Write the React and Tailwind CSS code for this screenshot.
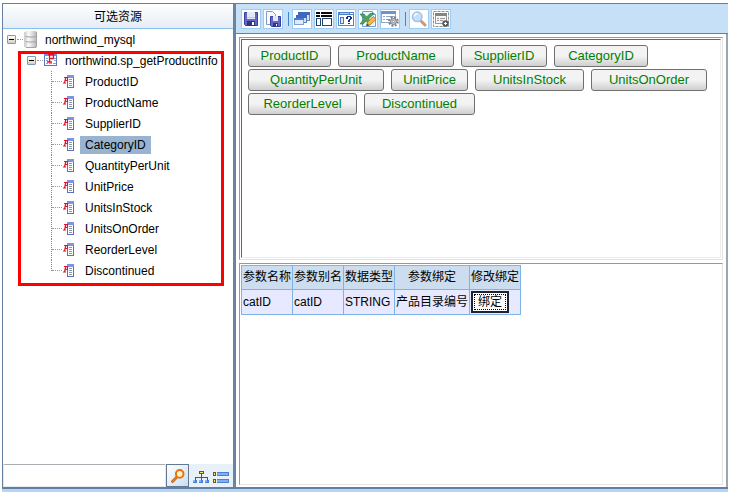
const FIELDS = [
    { name: 'ProductID', width: 'w-[83px]' },
    { name: 'ProductName', width: 'w-[116px]' },
    { name: 'SupplierID', width: 'w-[86px]' },
    { name: 'CategoryID', width: 'w-[94px]' },
    { name: 'QuantityPerUnit', width: 'w-[136px]' },
    { name: 'UnitPrice', width: 'w-[77px]' },
    { name: 'UnitsInStock', width: 'w-[109px]' },
    { name: 'UnitsOnOrder', width: 'w-[116px]' },
    { name: 'ReorderLevel', width: 'w-[109px]' },
    { name: 'Discontinued', width: 'w-[111px]' },
]

const PARAM_COLUMNS = ['参数名称', '参数别名', '数据类型', '参数绑定', '修改绑定']

const PARAMS = [{ name: 'catID', alias: 'catID', type: 'STRING', binding: '产品目录编号' }]

function SaveIcon() {
    return (
        <svg width="16" height="16" viewBox="0 0 16 16">
            <path d="M1.500 1.500h13v13h-12l-1-1z" fill="#6468c4" stroke="#3d3f9c" />
            <rect x="4" y="1" width="8" height="7" fill="#dfe9f8" />
            <path d="M4 6.500h8" stroke="#b9cbea" />
            <rect x="4" y="10" width="8" height="5" fill="#33347a" />
            <rect x="9" y="11" width="2" height="3" fill="#fff" />
        </svg>
    )
}

function SaveAsIcon() {
    return (
        <svg width="16" height="16" viewBox="0 0 16 16">
            <path d="M1.500 .5h6l3 3v10h-9z" fill="#f4f9ff" stroke="#7f9cc8" />
            <path d="M5.500 5.500h10v10h-9l-1-1z" fill="#6468c4" stroke="#3d3f9c" />
            <rect x="8" y="5" width="5" height="5" fill="#dfe9f8" />
            <rect x="8" y="12" width="5" height="4" fill="#33347a" />
            <rect x="11" y="13" width="1" height="2" fill="#fff" />
        </svg>
    )
}

function WindowsIcon() {
    return (
        <svg width="16" height="16" viewBox="0 0 16 16">
            <rect x="4.500" y="1.500" width="11" height="8" fill="#cfe0f7" stroke="#5a82c8" />
            <rect x="4" y="1" width="12" height="3" fill="#3e68bc" />
            <rect x="2.500" y="4.500" width="10" height="7" fill="#cfe0f7" stroke="#5a82c8" />
            <rect x="2" y="4" width="11" height="3" fill="#3e68bc" />
            <rect x=".5" y="7.500" width="9" height="6" fill="#dfeafa" stroke="#7f9fd8" />
            <rect x="0" y="7" width="10" height="2" fill="#4f78ca" />
        </svg>
    )
}

function LayoutIcon() {
    return (
        <svg width="16" height="16" viewBox="0 0 16 16" shapeRendering="crispEdges">
            <path d="M0 1h4v2H0zM5 1h11v2H5zM0 4h4v2H0zM5 4h11v2H5z" fill="#0a0a0a" />
            <rect x="0" y="7" width="5" height="8" fill="#21456f" />
            <rect x="1" y="8" width="3" height="6" fill="#fff" />
            <rect x="6" y="7" width="10" height="8" fill="#21456f" />
            <rect x="7" y="8" width="8" height="6" fill="#fff" />
        </svg>
    )
}

function HelpFormIcon() {
    return (
        <svg width="16" height="16" viewBox="0 0 16 16" shapeRendering="crispEdges">
            <rect x="0" y="1" width="16" height="14" fill="#4f82c8" />
            <rect x="1" y="4" width="14" height="10" fill="#fff" />
            <path d="M2 2h9v1H2z" fill="#a9cbf5" />
            <path d="M12 2h3v1h-3z" fill="#fff" />
            <path d="M2 6h4v7H2z" fill="#4777bd" />
            <path d="M3 7h2v5H3z" fill="#dbe8fa" />
            <path d="M9 5h4v1H9zM8 6h2v2H8zM12 6h2v2h-2zM11 8h2v1h-2zM10 9h2v2h-2zM10 12h2v1h-2z" fill="#142f86" />
        </svg>
    )
}

function ExcelEditIcon() {
    return (
        <svg width="16" height="16" viewBox="0 0 16 16">
            <path d="M2.500 .5h10l3 3v12h-13z" fill="#eaf3ff" stroke="#6c9fda" />
            <path d="M12.500 .5v3h3" fill="#fff" stroke="#6c9fda" />
            <path d="M0 3h4l2.500 3L10 2.500h4L8.500 8l1.500 2-2 2-2-2-3 3H0l4-5z" fill="#4ba35c" stroke="#24733a" strokeWidth=".6" />
            <path d="M6.500 15l1-4 6-5.500 2.500 3-6 5.500z" fill="#f4b948" stroke="#a8701d" strokeWidth=".8" />
            <path d="M6.500 15l.7-2.500 2 1.800z" fill="#5b4020" />
        </svg>
    )
}

function FormGearIcon() {
    return (
        <svg width="18" height="16" viewBox="0 0 18 16">
            <rect x=".5" y=".5" width="14" height="11" fill="#fff" stroke="#91a9cd" />
            <rect x="0" y="0" width="15" height="3" fill="#6b93cf" />
            <path d="M2 5.500h2M5 5.500h8M2 8.500h2M5 8.500h4" stroke="#8fa5c4" />
            <circle cx="12.500" cy="10.500" r="4.300" fill="none" stroke="#777e88" strokeWidth="2" strokeDasharray="1.9 1.480" />
            <circle cx="12.500" cy="10.500" r="3" fill="#c2c8d0" stroke="#777e88" />
            <circle cx="12.500" cy="10.500" r="1.100" fill="#fff" stroke="#777e88" strokeWidth=".7" />
        </svg>
    )
}

function PreviewIcon() {
    return (
        <svg width="16" height="16" viewBox="0 0 16 16">
            <path d="M10 10l4 4" stroke="#c99a6c" strokeWidth="3" strokeLinecap="round" />
            <circle cx="6.200" cy="5.800" r="4.800" fill="#c3e0fb" stroke="#9dc0e8" strokeWidth="1.400" />
            <path d="M3.500 5.500c0-2 1.500-2.700 3-2.700" fill="none" stroke="#fff" strokeWidth="1.400" />
        </svg>
    )
}

function FormAddIcon() {
    return (
        <svg width="18" height="18" viewBox="0 0 18 18">
            <rect x="1.500" y="1.500" width="15" height="15" fill="none" stroke="#8e8e8e" strokeDasharray="3 1" />
            <rect x="3.500" y="3.500" width="11" height="10" fill="#f6f6f6" stroke="#999" />
            <rect x="3" y="3" width="12" height="3" fill="#858585" />
            <path d="M5 8.500h2M8 8.500h5M5 10.500h2M8 10.500h3" stroke="#999" />
            <circle cx="13.500" cy="13.500" r="3.200" fill="#5c5c5c" />
            <path d="M13.500 12v3M12 13.500h3" stroke="#fff" />
        </svg>
    )
}

function DatabaseIcon() {
    return (
        <svg width="14" height="17" viewBox="0 0 14 17" className="shrink-0">
            <defs>
                <linearGradient id="db" x1="0" x2="1">
                    <stop offset="0" stopColor="#cfcfcf" />
                    <stop offset=".3" stopColor="#fbfbfb" />
                    <stop offset="1" stopColor="#b4b4b4" />
                </linearGradient>
            </defs>
            <rect x="1" y="0" width="12" height="6" rx="2" fill="url(#db)" />
            <rect x="1" y="5" width="12" height="6" rx="1" fill="url(#db)" />
            <rect x="1" y="10" width="12" height="7" rx="2" fill="url(#db)" />
            <path d="M1.500 5.500c2 .7 9 .7 11 0M1.500 10.500c2 .7 9 .7 11 0M2 16.500h10M12.500 1v15" fill="none" stroke="#a2a2a2" />
            <path d="M.5 1v15" stroke="#d0d0d0" />
        </svg>
    )
}

function ProcedureIcon() {
    return (
        <svg width="14" height="13" viewBox="0 0 14 13" className="shrink-0">
            <rect x=".5" y=".5" width="12" height="11" fill="#fff" stroke="#5a76bd" />
            <rect x="0" y="0" width="13" height="2" fill="#6e8ee0" />
            <path d="M2 4.500h2M2 6.500h2M10 4.500h2M10 6.500h2M2 9.500h2M5 9.500h3M9 9.500h3" stroke="#86a4dc" />
            <path d="M4 .5h6M5.500 0v8M3 8h5M9.500 0v5M5 4.500h5" fill="none" stroke="#e3122c" strokeWidth="1.300" />
        </svg>
    )
}

function FieldIcon() {
    return (
        <svg width="12" height="13" viewBox="0 0 12 13" className="shrink-0">
            <rect x="4.500" y=".5" width="6" height="12" fill="#fff" stroke="#5b6fc0" />
            <rect x="4" y="0" width="7" height="3" fill="#7d93e6" />
            <path d="M6 4.500h3M6 6.500h3M6 8.500h3M6 10.500h3" stroke="#8a93a8" />
            <path d="M1 2.500h3.500v3H2M2.800 2.500L1.500 8M0 8h3" fill="none" stroke="#e3122c" strokeWidth="1.200" />
        </svg>
    )
}

function KeyIcon() {
    return (
        <svg width="14" height="14" viewBox="0 0 14 14">
            <path d="M6 8L1.500 12.500" stroke="#b4530a" strokeWidth="2.600" strokeLinecap="round" />
            <path d="M6 8L1.500 12.500" stroke="#f08a20" strokeWidth="1.200" strokeLinecap="round" />
            <circle cx="8.700" cy="4.900" r="3.800" fill="#fff1c0" stroke="#ea720a" strokeWidth="2" />
        </svg>
    )
}

function HierarchyIcon() {
    return (
        <svg width="16" height="13" viewBox="0 0 16 13" shapeRendering="crispEdges">
            <path d="M8 3h1v6H8zM2 6h13v1H2zM2 7h1v2H2zM14 7h1v2h-1z" fill="#555" />
            <rect x="6" y="0" width="5" height="3" fill="#6d5711" />
            <rect x="7" y="1" width="3" height="1" fill="#ffe35a" />
            <path d="M0 9h4v3H0zM6 9h4v3H6zM12 9h4v3h-4z" fill="#4a80d6" />
            <path d="M0 9h2v2H0zM6 9h2v2H6zM12 9h2v2h-2z" fill="#8ab2ef" />
        </svg>
    )
}

function ListIcon() {
    return (
        <svg width="16" height="13" viewBox="0 0 16 13" shapeRendering="crispEdges">
            <path d="M0 1h3v4H0zM0 8h3v4H0z" fill="#6d5711" />
            <path d="M1 2h1v2H1zM1 9h1v2H1z" fill="#ffe35a" />
            <path d="M4 1h12v4H4zM4 8h12v4H4z" fill="#4a80d6" />
            <path d="M4 2h11v2H4zM4 9h11v2H4z" fill="#83aeee" />
        </svg>
    )
}

const TOOL_GROUPS = [
    [
        { label: '保存', Icon: SaveIcon },
        { label: '另存为', Icon: SaveAsIcon },
    ],
    [
        { label: '窗口', Icon: WindowsIcon },
        { label: '布局', Icon: LayoutIcon },
        { label: '参数', Icon: HelpFormIcon },
        { label: '编辑', Icon: ExcelEditIcon },
        { label: '设置', Icon: FormGearIcon },
    ],
    [
        { label: '预览', Icon: PreviewIcon },
        { label: '添加', Icon: FormAddIcon },
    ],
]

function Toggle({ label }) {
    return (
        <button
            type="button"
            aria-label={label}
            aria-expanded="true"
            className="flex size-[9px] shrink-0 items-center justify-center rounded-[1px] border border-[#7b9ab8] bg-linear-to-b from-white to-[#d3d0c4]"
        >
            <span className="h-px w-[5px] bg-black" />
        </button>
    )
}

function Sidebar() {
    return (
        <aside className="flex w-[230px] shrink-0 flex-col bg-white">
            <h1 className="flex h-[25px] shrink-0 items-center justify-center border-b border-[#8cc0ea] bg-linear-to-b from-white to-[#e4ecf4] pt-px">
                可选资源
            </h1>
            <div className="relative min-h-0 flex-1 overflow-hidden">
                <ul>
                    <li>
                        <div className="flex h-[21px] items-center pl-1">
                            <Toggle label="northwind_mysql" />
                            <span className="mx-px w-[6px] border-t border-dotted border-[#999]" />
                            <DatabaseIcon />
                            <span className="ml-[7px]">northwind_mysql</span>
                        </div>
                        <ul>
                            <li>
                                <div className="flex h-[21px] items-center pl-6">
                                    <Toggle label="northwind.sp_getProductInfo" />
                                    <span className="mx-px w-[6px] border-t border-dotted border-[#999]" />
                                    <ProcedureIcon />
                                    <span className="ml-[7px]">northwind.sp_getProductInfo</span>
                                </div>
                                <ul>
                                    {FIELDS.map((f, i) => (
                                        <li key={f.name} className="flex h-[21px] items-center pl-12">
                                            <span
                                                className={`self-start border-l border-dotted border-[#888] ${i === FIELDS.length - 1 ? 'h-[11px]' : 'h-[21px]'}`}
                                            />
                                            <span className="mr-px w-[10px] border-t border-dotted border-[#999]" />
                                            <FieldIcon />
                                            <span
                                                className={`ml-[5px] px-[5px] leading-[18px] ${f.name === 'CategoryID' ? 'bg-[#99b4d1]' : ''}`}
                                            >
                                                {f.name}
                                            </span>
                                        </li>
                                    ))}
                                </ul>
                            </li>
                        </ul>
                    </li>
                </ul>
                {/* highlight frame over the procedure and its fields */}
                <div className="pointer-events-none absolute top-[22px] left-[15px] h-[235px] w-[206px] border-3 border-[#ff0000]" />
            </div>
            <div className="flex h-[23px] shrink-0 items-stretch bg-[#e8f0f9]">
                <input
                    type="text"
                    aria-label="搜索资源"
                    className="min-w-0 flex-1 rounded-xs border border-[#e3e9ef] border-t-[#aaadb2] bg-white px-1 outline-none"
                />
                <button
                    type="button"
                    aria-label="搜索"
                    className="flex w-[23px] items-center justify-center border border-[#64798f] bg-linear-to-br from-white to-[#c8dff4]"
                >
                    <KeyIcon />
                </button>
                <button type="button" aria-label="树形" className="ml-1 flex w-4 items-center pt-1">
                    <HierarchyIcon />
                </button>
                <button type="button" aria-label="列表" className="mr-1 ml-1 flex w-4 items-center pt-1">
                    <ListIcon />
                </button>
            </div>
        </aside>
    )
}

function Toolbar() {
    return (
        <div className="flex h-[30px] shrink-0 items-center border-b border-[#2393f0] bg-[#c5e0f7] pl-[5px]">
            {TOOL_GROUPS.map((group, i) => (
                <div key={i} className="flex items-center">
                    {i > 0 && <span className="mr-[3px] ml-[5px] h-[14px] w-px bg-[#3e86d0]" />}
                    <div className="flex gap-[2px]">
                        {group.map(({ label, Icon }) => (
                            <button
                                key={label}
                                type="button"
                                aria-label={label}
                                className="flex size-5 items-center justify-center border border-[#9bcdf5] bg-white"
                            >
                                <Icon />
                            </button>
                        ))}
                    </div>
                </div>
            ))}
        </div>
    )
}

function ParamTable() {
    return (
        <table className="border-collapse leading-4">
            <thead>
                <tr className="h-6 bg-[#cdddf0]">
                    {PARAM_COLUMNS.map((c) => (
                        <th key={c} className="border border-[#7fb2e5] px-px font-normal">
                            {c}
                        </th>
                    ))}
                </tr>
            </thead>
            <tbody>
                {PARAMS.map((p) => (
                    <tr key={p.name} className="h-[25px] bg-[#e6e9ff]">
                        <td className="border border-[#7fb2e5] px-px">{p.name}</td>
                        <td className="border border-[#7fb2e5] px-px">{p.alias}</td>
                        <td className="border border-[#7fb2e5] px-px">{p.type}</td>
                        <td className="border border-[#7fb2e5] px-px">{p.binding}</td>
                        <td className="border border-[#7fb2e5] px-px">
                            <button type="button" className="block border-2 border-[#1c2430] bg-white p-px">
                                <span className="block border border-dotted border-black px-[3px] leading-[14px]">绑定</span>
                            </button>
                        </td>
                    </tr>
                ))}
            </tbody>
        </table>
    )
}

export default function App() {
    return (
        <div className="flex h-screen flex-col bg-white px-[2px] pt-[3px] pb-px font-['Liberation_Sans','Noto_Sans_CJK_SC',sans-serif] text-[12px] leading-4 text-black">
            <div className="flex min-h-0 flex-1 border-t border-b-2 border-l border-[#647f9f]">
                <Sidebar />
                <div className="w-[3px] shrink-0 bg-[#6b84a3]" />
                <main className="flex min-w-0 flex-1 flex-col bg-white">
                    <Toolbar />
                    <div className="flex min-h-0 flex-1 flex-col gap-[3px] border-r-2 border-[#9aa7b0] px-[3px] pt-[3px] pb-[2px]">
                        <section className="flex min-h-0 flex-1 border border-[#e3e3e3] border-t-[#999] border-l-[#999] p-px">
                            <div className="flex flex-1 flex-wrap content-start gap-x-[7px] gap-y-[2px] border border-[#ececec] border-t-[#666] border-l-[#666] px-[6px] pt-[5px]">
                                {FIELDS.map((f) => (
                                    <button
                                        key={f.name}
                                        type="button"
                                        className={`h-[22px] rounded-[3px] border border-[#707070] bg-linear-to-b from-[#f3f3f3] from-50% to-[#cfcfcf] text-[13px] leading-5 text-[#008000] ${f.width}`}
                                    >
                                        {f.name}
                                    </button>
                                ))}
                            </div>
                        </section>
                        <section className="min-h-0 flex-1 border border-[#e3e3e3] border-t-[#999] border-l-[#999] p-px">
                            <ParamTable />
                        </section>
                    </div>
                </main>
            </div>
            <div className="h-[3px] shrink-0 bg-[#b4d6f4]" />
        </div>
    )
}
